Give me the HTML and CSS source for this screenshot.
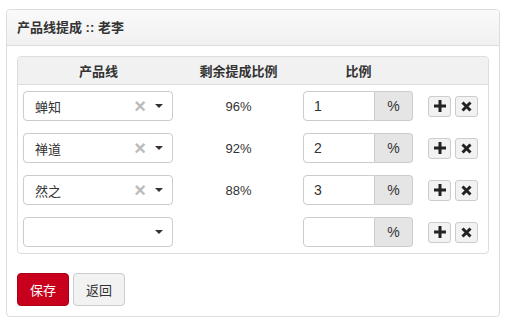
FILE: index.html
```html
<!DOCTYPE html>
<html lang="zh-CN">
<head>
<meta charset="UTF-8">
<title>产品线提成</title>
<link rel="stylesheet" href="styles.css">
</head>
<body>
    <div class="panel">
        <div class="panel_heading">产品线提成 :: 老李</div>
        <div class="panel_body">
            <div class="rate_table">
                <div class="rate_row rate_head">
                    <div>产品线</div>
                    <div>剩余提成比例</div>
                    <div>比例</div>
                    <div></div>
                </div>

                <div class="rate_row">
                    <div class="chosen"><span class="chosen_text">蝉知</span><span class="chosen_clear">&times;</span><span class="caret"></span></div>
                    <div class="remain">96%</div>
                    <div class="input_group"><span class="input_box">1</span><span class="addon">%</span></div>
                    <div class="actions">
                        <button class="icon_btn" type="button"><svg width="12" height="12" viewBox="0 0 12 12"><path d="M4.5 0h3v4.5H12v3H7.5V12h-3V7.5H0v-3h4.5z" fill="#222"/></svg></button>
                        <button class="icon_btn" type="button"><svg width="11" height="11" viewBox="0 0 11 11"><path d="M1.5 1.5l8 8M9.5 1.5l-8 8" stroke="#222" stroke-width="3"/></svg></button>
                    </div>
                </div>

                <div class="rate_row">
                    <div class="chosen"><span class="chosen_text">禅道</span><span class="chosen_clear">&times;</span><span class="caret"></span></div>
                    <div class="remain">92%</div>
                    <div class="input_group"><span class="input_box">2</span><span class="addon">%</span></div>
                    <div class="actions">
                        <button class="icon_btn" type="button"><svg width="12" height="12" viewBox="0 0 12 12"><path d="M4.5 0h3v4.5H12v3H7.5V12h-3V7.5H0v-3h4.5z" fill="#222"/></svg></button>
                        <button class="icon_btn" type="button"><svg width="11" height="11" viewBox="0 0 11 11"><path d="M1.5 1.5l8 8M9.5 1.5l-8 8" stroke="#222" stroke-width="3"/></svg></button>
                    </div>
                </div>

                <div class="rate_row">
                    <div class="chosen"><span class="chosen_text">然之</span><span class="chosen_clear">&times;</span><span class="caret"></span></div>
                    <div class="remain">88%</div>
                    <div class="input_group"><span class="input_box">3</span><span class="addon">%</span></div>
                    <div class="actions">
                        <button class="icon_btn" type="button"><svg width="12" height="12" viewBox="0 0 12 12"><path d="M4.5 0h3v4.5H12v3H7.5V12h-3V7.5H0v-3h4.5z" fill="#222"/></svg></button>
                        <button class="icon_btn" type="button"><svg width="11" height="11" viewBox="0 0 11 11"><path d="M1.5 1.5l8 8M9.5 1.5l-8 8" stroke="#222" stroke-width="3"/></svg></button>
                    </div>
                </div>

                <div class="rate_row">
                    <div class="chosen"><span class="chosen_text"></span><span class="caret"></span></div>
                    <div class="remain"></div>
                    <div class="input_group"><span class="input_box"></span><span class="addon">%</span></div>
                    <div class="actions">
                        <button class="icon_btn" type="button"><svg width="12" height="12" viewBox="0 0 12 12"><path d="M4.5 0h3v4.5H12v3H7.5V12h-3V7.5H0v-3h4.5z" fill="#222"/></svg></button>
                        <button class="icon_btn" type="button"><svg width="11" height="11" viewBox="0 0 11 11"><path d="M1.5 1.5l8 8M9.5 1.5l-8 8" stroke="#222" stroke-width="3"/></svg></button>
                    </div>
                </div>
            </div>

            <div class="form_actions">
                <button class="btn btn_primary" type="button">保存</button>
                <button class="btn" type="button">返回</button>
            </div>
        </div>
    </div>
</body>
</html>
```

FILE: styles.css
```css
*,
*::before,
*::after {
  box-sizing: border-box;
}
body {
    margin: 0;
    padding: 9px 8px 0 6px;
    font-family: "Liberation Sans", "Noto Sans CJK SC", sans-serif;
    font-size: 13px;
    color: #333;
    background: #fff;
}

.panel {
    width: 494px;
    border: 1px solid #ddd;
    border-radius: 4px;
}
.panel_heading {
    height: 36px;
    line-height: 35px;
    padding: 0 10px;
    font-weight: bold;
    background: linear-gradient(#fafafa, #f1f1f1);
    border-bottom: 1px solid #ddd;
    border-radius: 4px 4px 0 0;
}
.panel_body {
    padding: 10px;
}

.rate_table {
    border: 1px solid #ddd;
    border-radius: 4px;
}
.rate_row {
    display: grid;
    grid-template-columns: 161px 119px 121px 1fr;
    align-items: center;
    height: 42px;
}
.rate_row > div:first-child {
    margin-left: 5px;
}
.rate_head {
    height: 28px;
    background: #f1f1f1;
    border-bottom: 1px solid #ddd;
    border-radius: 4px 4px 0 0;
    font-weight: bold;
    text-align: center;
}
.rate_head > div:first-child {
    margin-left: 0;
}

.chosen {
    display: flex;
    align-items: center;
    width: 150px;
    height: 30px;
    padding: 0 9px 0 11px;
    border: 1px solid #ccc;
    border-radius: 4px;
    background: #fff;
}
.chosen_text {
    flex: 1;
}
.chosen_clear {
    color: #bbb;
    font-size: 20px;
    font-weight: bold;
    margin-right: 9px;
    line-height: 1;
}
.caret {
    width: 0;
    height: 0;
    border-left: 4px solid transparent;
    border-right: 4px solid transparent;
    border-top: 4px solid #333;
}
.remain {
    text-align: center;
}

.input_group {
    display: flex;
    width: 110px;
    height: 30px;
    margin-left: 5px;
    font-size: 14px;
}
.input_box {
    flex: 1;
    padding: 0 10px;
    line-height: 28px;
    border: 1px solid #ccc;
    border-radius: 4px 0 0 4px;
    background: #fff;
}
.addon {
    width: 38px;
    line-height: 28px;
    text-align: center;
    background: #e5e5e5;
    border: 1px solid #ccc;
    border-left: 0;
    border-radius: 0 4px 4px 0;
}

.actions {
    display: flex;
    gap: 4px;
    padding-left: 9px;
}
.icon_btn {
    display: flex;
    align-items: center;
    justify-content: center;
    width: 23px;
    height: 21px;
    padding: 0;
    background: #f2f2f2;
    border: 1px solid #ccc;
    border-radius: 3px;
}

.form_actions {
    display: flex;
    gap: 4px;
    margin-top: 19px;
}
.btn {
    width: 52px;
    height: 33px;
    font-family: inherit;
    font-size: 13px;
    color: #333;
    background: #f2f2f2;
    border: 1px solid #ccc;
    border-radius: 4px;
}
.btn_primary {
    color: #fff;
    background: #c9001b;
    border-color: #ad0017;
}
```
